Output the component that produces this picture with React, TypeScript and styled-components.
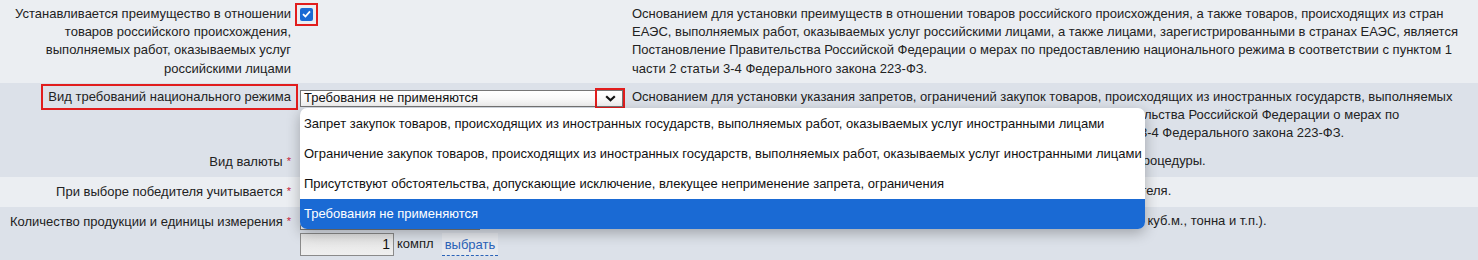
import React from "react";
import styled, { createGlobalStyle } from "styled-components";

const GlobalStyle = createGlobalStyle`
  html, body {
    margin: 0;
    padding: 0;
    background: #dce1e9;
  }
  body {
    font-family: Arial, "Liberation Sans", sans-serif;
    font-size: 13px;
    color: #222;
    overflow: hidden;
  }
`;

const Form = styled.div`
  width: 1478px;
`;

const Row = styled.div<{ $tone: "light" | "dark" }>`
  display: grid;
  grid-template-columns: 296px 336px 1fr;
  background: ${(p) => (p.$tone === "light" ? "#ebeef2" : "#dce1e9")};
  line-height: 18.2px;
`;

const Label = styled.div`
  padding: 5px 5px 5px 2px;
  text-align: right;
`;

const Required = styled.span`
  color: #c8243c;
  font-size: 11px;
  margin-left: 4px;
  vertical-align: 1px;
`;

const Control = styled.div`
  padding: 5px 0 5px 4px;
  position: relative;
`;

const Hint = styled.div`
  padding: 5px 12px 5px 0;
`;

// red annotation frames
const Marked = styled.span`
  display: inline-block;
  padding: 1px 4px;
  margin: -1px -4px;
  outline: 2px solid #e11d1d;
  outline-offset: 1px;
`;

const CheckFrame = styled.span`
  display: inline-block;
  margin-top: 2px;
  outline: 2px solid #e11d1d;
  outline-offset: 3px;
  line-height: 0;
`;

const Check = styled.span`
  display: inline-flex;
  align-items: center;
  justify-content: center;
  width: 13px;
  height: 13px;
  border-radius: 2px;
  background: #1a6ad4;
`;

const SelectWrap = styled.div`
  position: relative;
  width: 323px;
  margin-top: 2px;
`;

const SelectBox = styled.div<{ $h?: number; $w?: number }>`
  display: flex;
  align-items: center;
  box-sizing: border-box;
  width: ${(p) => (p.$w ? `${p.$w}px` : "100%")};
  height: ${(p) => p.$h ?? 17}px;
  border: 1px solid #767676;
  background: linear-gradient(#ffffff, #f3f3f3);
  padding-left: 3px;
  color: #111;
`;

const SelectText = styled.span`
  flex: 1;
  white-space: nowrap;
`;

const Arrow = styled.span`
  display: flex;
  align-items: center;
  justify-content: center;
  width: 24px;
  height: 15px;
  outline: 2px solid #e11d1d;
  outline-offset: 1px;
`;

const Popup = styled.div`
  position: absolute;
  left: 0;
  top: calc(100% + 1px);
  z-index: 10;
  width: max-content;
  padding-top: 1px;
  background: #fff;
  border-radius: 7px;
  overflow: hidden;
  box-shadow: 0 4px 14px rgba(0, 0, 0, 0.28);
`;

const Option = styled.div<{ $selected?: boolean }>`
  height: 30px;
  line-height: 30px;
  padding: 0 3px 0 4px;
  white-space: nowrap;
  color: ${(p) => (p.$selected ? "#fff" : "#111")};
  background: ${(p) => (p.$selected ? "#1a6ad4" : "transparent")};
`;

const QtyLine = styled.div`
  display: flex;
  align-items: center;
  margin-top: 3px;
`;

const QtyInput = styled.div`
  box-sizing: border-box;
  width: 94px;
  height: 23px;
  border: 1px solid #8a8a8a;
  background: linear-gradient(#e2e2e2, #efefef);
  text-align: right;
  padding-right: 3px;
  font-size: 14px;
  line-height: 21px;
  color: #111;
`;

const Unit = styled.span`
  margin-left: 3px;
  color: #1c1c1c;
`;

const PickLink = styled.a`
  margin-left: 8px;
  padding: 3px 3px 1px;
  background: #e6e9ee;
  color: #2a63b8;
  text-decoration: none;
  border-bottom: 1px dashed #2a63b8;
  line-height: 18px;
`;

const options = [
  "Запрет закупок товаров, происходящих из иностранных государств, выполняемых работ, оказываемых услуг иностранными лицами",
  "Ограничение закупок товаров, происходящих из иностранных государств, выполняемых работ, оказываемых услуг иностранными лицами",
  "Присутствуют обстоятельства, допускающие исключение, влекущее неприменение запрета, ограничения",
  "Требования не применяются",
];

export default function App() {
  const selected = options[3];

  return (
    <>
      <GlobalStyle />
      <Form>
        <Row $tone="light">
          <Label>
            Устанавливается преимущество в отношении товаров российского происхождения, выполняемых работ,
            оказываемых услуг российскими лицами
          </Label>
          <Control>
            <CheckFrame>
              <Check>
                <svg width="9" height="8" viewBox="0 0 9 8">
                  <path d="M1 4.2 L3.4 6.5 L8 1.3" fill="none" stroke="#fff" strokeWidth="1.8" />
                </svg>
              </Check>
            </CheckFrame>
          </Control>
          <Hint>
            Основанием для установки преимуществ в отношении товаров российского происхождения, а также товаров,
            происходящих из стран ЕАЭС, выполняемых работ, оказываемых услуг российскими лицами, а также лицами,
            зарегистрированными в странах ЕАЭС, является Постановление Правительства Российской Федерации о мерах по
            предоставлению национального режима в соответствии с пунктом 1 части 2 статьи 3-4 Федерального закона
            223-ФЗ.
          </Hint>
        </Row>

        <Row $tone="dark">
          <Label>
            <Marked>Вид требований национального режима</Marked>
          </Label>
          <Control>
            <SelectWrap>
              <SelectBox>
                <SelectText>{selected}</SelectText>
                <Arrow>
                  <svg width="11" height="7" viewBox="0 0 11 7">
                    <path d="M1.2 1.2 L5.5 5.3 L9.8 1.2" fill="none" stroke="#111" strokeWidth="2.2" />
                  </svg>
                </Arrow>
              </SelectBox>
              <Popup>
                {options.map((o) => (
                  <Option key={o} $selected={o === selected}>
                    {o}
                  </Option>
                ))}
              </Popup>
            </SelectWrap>
          </Control>
          <Hint>
            Основанием для установки указания запретов, ограничений закупок товаров, происходящих из иностранных
            государств, выполняемых работ, оказываемых услуг иностранными лицами, является Постановление
            Правительства Российской Федерации о мерах по предоставлению национального режима в соответствии с
            пунктом 1 части 2 статьи 3-4 Федерального закона 223-ФЗ.
          </Hint>
        </Row>

        <Row $tone="dark">
          <Label>
            Вид валюты<Required>*</Required>
          </Label>
          <Control>
            <SelectBox $h={20} $w={180} />
          </Control>
          <Hint>Валюта, в которой участники будут подавать свои ценовые предложения в рамках процедуры.</Hint>
        </Row>

        <Row $tone="light">
          <Label>
            При выборе победителя учитывается<Required>*</Required>
          </Label>
          <Control />
          <Hint>Укажите критерий, который будет учитываться заказчиком при определении победителя.</Hint>
        </Row>

        <Row $tone="dark">
          <Label>
            Количество продукции и единицы измерения<Required>*</Required>
          </Label>
          <Control>
            <SelectBox $h={18} $w={180} />
            <QtyLine>
              <QtyInput>1</QtyInput>
              <Unit>компл</Unit>
              <PickLink href="#">выбрать</PickLink>
            </QtyLine>
          </Control>
          <Hint>
            Укажите количество закупаемой продукции и единицу измерения (штука, кг, м, кв.м., куб.м., тонна и т.п.).
          </Hint>
        </Row>
      </Form>
    </>
  );
}
